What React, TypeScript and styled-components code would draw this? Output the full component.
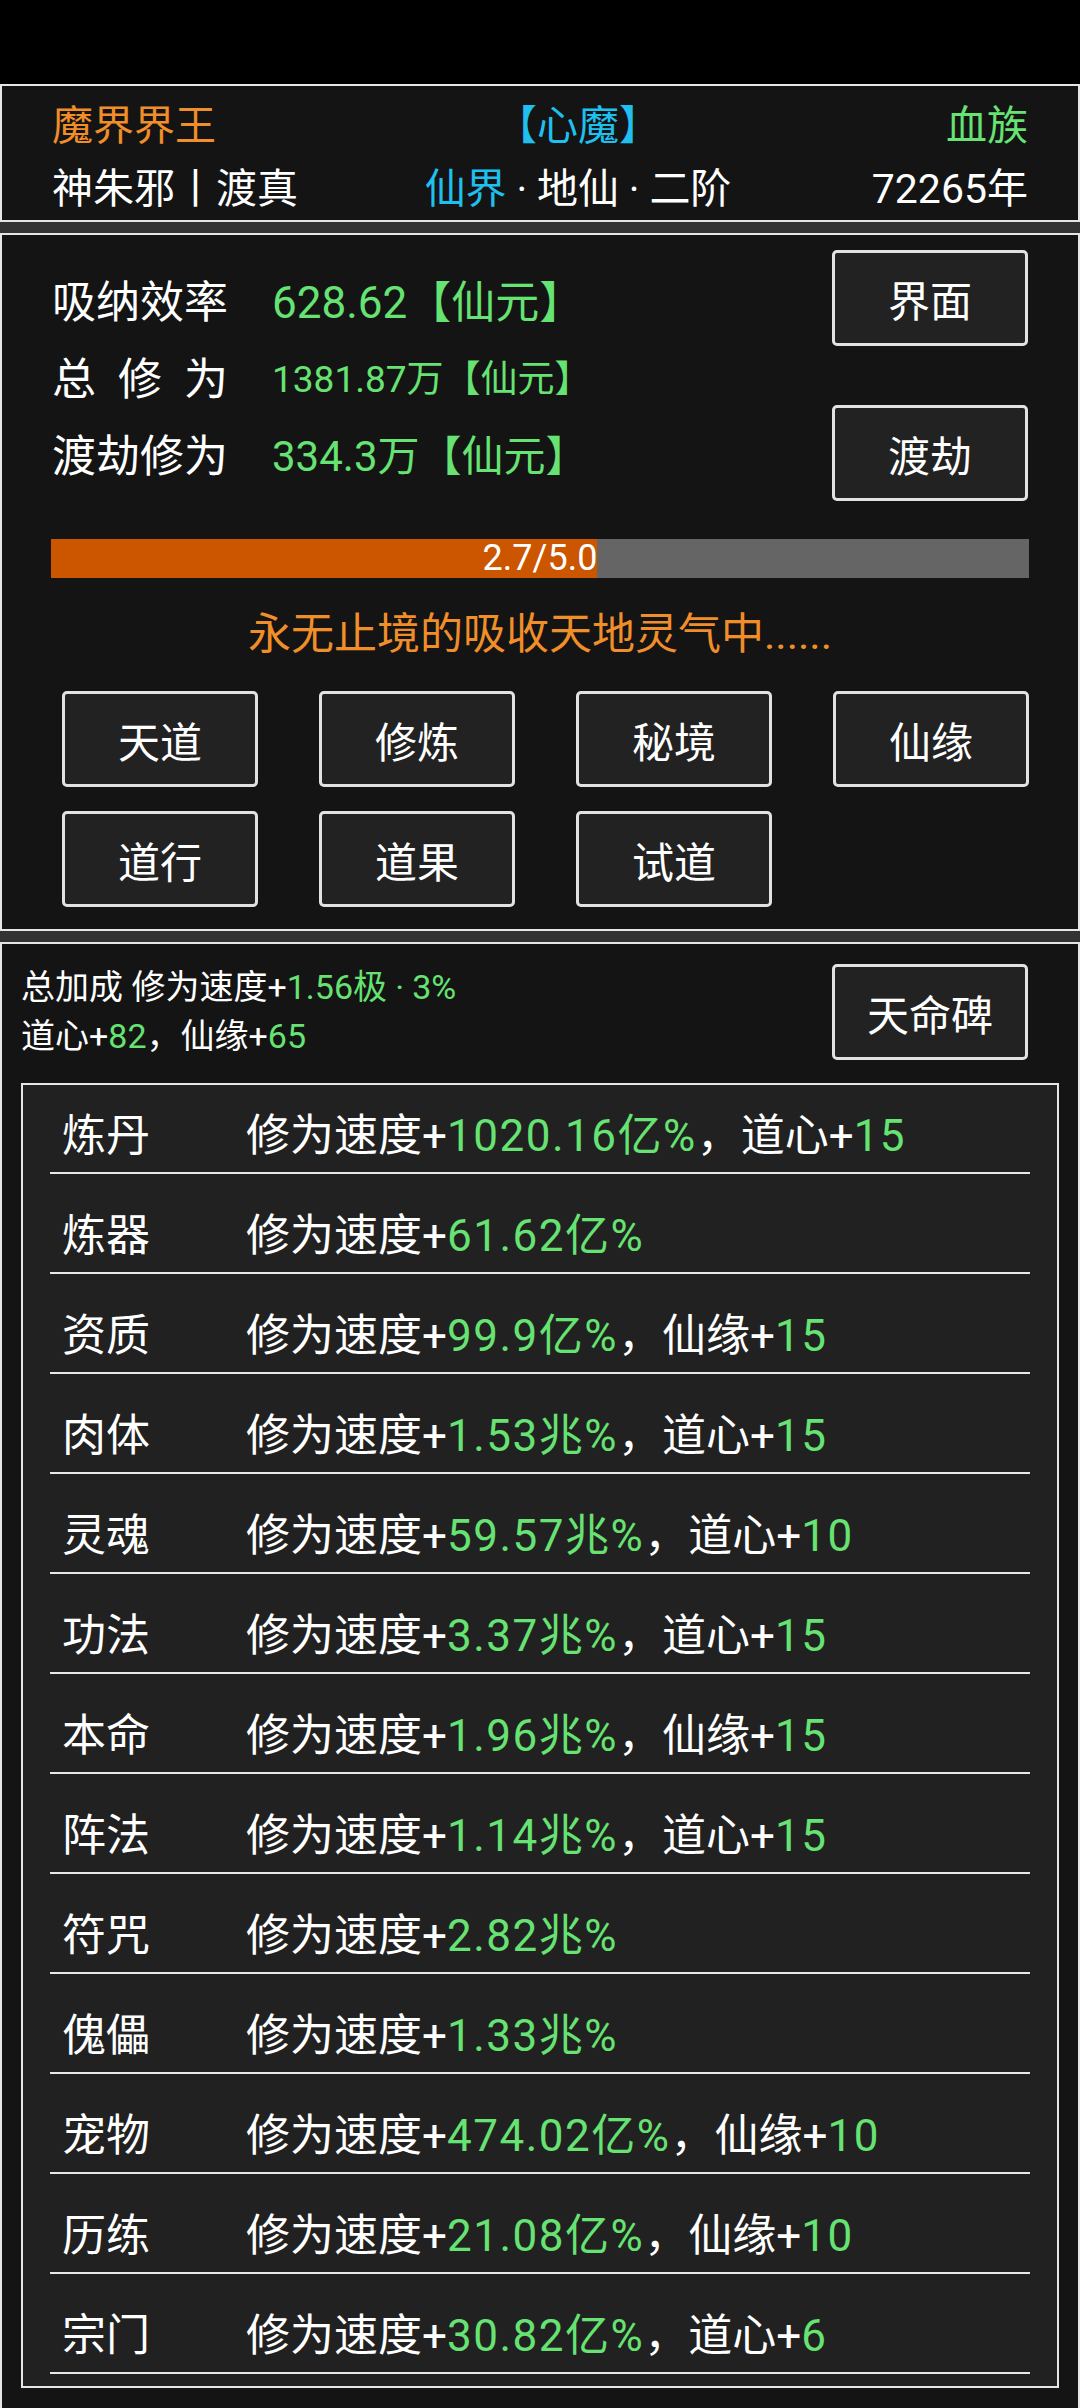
import React from 'react';
import styled, { createGlobalStyle } from 'styled-components';

const GlobalStyle = createGlobalStyle`
  html, body {
    margin: 0;
    padding: 0;
    background: #333;
    overflow: hidden;
  }
  body {
    font-family: Roboto, "Noto Sans CJK SC", sans-serif;
    color: #fff;
  }
  * { box-sizing: border-box; }
`;

const GREEN = '#66e372';
const ORANGE = '#f08e2a';
const CYAN = '#1fc0ef';

const Screen = styled.div`
  width: 1080px;
  height: 2408px;
  background: #333;
  display: flex;
  flex-direction: column;
  overflow: hidden;
`;

const StatusBar = styled.div`
  height: 84px;
  background: #000;
  flex-shrink: 0;
`;

const Panel = styled.section<{ $last?: boolean }>`
  background: #141414;
  border: 2px solid #e6e6e6;
  border-bottom: ${p => (p.$last ? 'none' : '2px solid #e6e6e6')};
  margin-bottom: ${p => (p.$last ? 0 : 11)}px;
  flex: ${p => (p.$last ? 1 : 'none')};
`;

const HeaderGrid = styled.div`
  display: grid;
  grid-template-columns: 326px 400px 1fr;
  grid-auto-rows: 63px;
  align-items: center;
  font-size: 41px;
  padding: 4px 50px 4px;
`;

const Cell = styled.div<{ $align: 'left' | 'center' | 'right'; $color?: string }>`
  text-align: ${p => p.$align};
  color: ${p => p.$color ?? '#fff'};
  white-space: nowrap;
`;

const Tint = styled.span<{ $color: string }>`
  color: ${p => p.$color};
`;

const Dot = styled.span`
  font-family: Roboto, sans-serif;
  padding: 0 0.24em;
`;

const CultBody = styled.div`
  padding: 15px 50px 22px;
`;

const TopSection = styled.div`
  display: flex;
  justify-content: space-between;
  align-items: center;
`;

const StatList = styled.div`
  display: flex;
  flex-direction: column;
`;

const StatRow = styled.div`
  display: flex;
  align-items: center;
  height: 77px;
  white-space: nowrap;
`;

const StatLabel = styled.span`
  width: 176px;
  font-size: 44px;
  text-align: justify;
  text-align-last: justify;
  margin-right: 44px;
`;

const StatValue = styled.span<{ $size: number }>`
  color: ${GREEN};
  font-size: ${p => p.$size}px;
`;

const SideButtons = styled.div`
  display: flex;
  flex-direction: column;
  gap: 59px;
`;

const Btn = styled.div`
  width: 196px;
  height: 96px;
  border: 3px solid #e2e2e2;
  border-radius: 5px;
  background: #222;
  color: #fff;
  font-size: 42px;
  display: flex;
  align-items: center;
  justify-content: center;
`;

const Progress = styled.div<{ $pct: number }>`
  margin: 38px -1px 0;
  height: 39px;
  background: linear-gradient(
    to right,
    #cc5500 ${p => p.$pct}%,
    #656565 ${p => p.$pct}%
  );
  color: #fff;
  font-size: 36px;
  line-height: 39px;
  text-align: center;
`;

const Message = styled.div`
  height: 113px;
  line-height: 113px;
  text-align: center;
  color: ${ORANGE};
  font-size: 43px;
`;

const ButtonGrid = styled.div`
  display: grid;
  grid-template-columns: repeat(4, 196px);
  column-gap: 61px;
  row-gap: 24px;
  padding-left: 10px;
`;

const SummaryBar = styled.div`
  display: flex;
  justify-content: space-between;
  align-items: center;
  padding: 19px 50px 0 19px;
`;

const SummaryText = styled.div`
  font-size: 34px;
  line-height: 49px;
  white-space: nowrap;
`;

const ListBox = styled.div`
  margin: 22px 19px 0;
  border: 2px solid #e6e6e6;
  background: #212121;
  padding: 0 27px 12px;
  display: flex;
  flex-direction: column;
  gap: 11px;
`;

const ListRow = styled.div`
  display: flex;
  padding: 26px 0 11px 12px;
  line-height: 50px;
  font-size: 44px;
  border-bottom: 2px solid #e8e8e8;
  white-space: nowrap;

  ${Tint} {
    letter-spacing: 1.5px;
  }
`;

const RowLabel = styled.span`
  width: 184px;
  flex-shrink: 0;
`;

type Bonus = { name: string; speed: string; extra?: [string, string] };

const bonuses: Bonus[] = [
  { name: '炼丹', speed: '1020.16亿%', extra: ['道心', '15'] },
  { name: '炼器', speed: '61.62亿%' },
  { name: '资质', speed: '99.9亿%', extra: ['仙缘', '15'] },
  { name: '肉体', speed: '1.53兆%', extra: ['道心', '15'] },
  { name: '灵魂', speed: '59.57兆%', extra: ['道心', '10'] },
  { name: '功法', speed: '3.37兆%', extra: ['道心', '15'] },
  { name: '本命', speed: '1.96兆%', extra: ['仙缘', '15'] },
  { name: '阵法', speed: '1.14兆%', extra: ['道心', '15'] },
  { name: '符咒', speed: '2.82兆%' },
  { name: '傀儡', speed: '1.33兆%' },
  { name: '宠物', speed: '474.02亿%', extra: ['仙缘', '10'] },
  { name: '历练', speed: '21.08亿%', extra: ['仙缘', '10'] },
  { name: '宗门', speed: '30.82亿%', extra: ['道心', '6'] },
];

const actions = ['天道', '修炼', '秘境', '仙缘', '道行', '道果', '试道'];

export default function App() {
  const progress = 55.8;
  return (
    <>
      <GlobalStyle />
      <Screen>
        <StatusBar />

        <Panel>
          <HeaderGrid>
            <Cell $align="left" $color={ORANGE}>魔界界王</Cell>
            <Cell $align="center" $color={CYAN}>【心魔】</Cell>
            <Cell $align="right" $color={GREEN}>血族</Cell>
            <Cell $align="left">神朱邪丨渡真</Cell>
            <Cell $align="center">
              <Tint $color={CYAN}>仙界</Tint>
              <Dot>·</Dot>地仙<Dot>·</Dot>二阶
            </Cell>
            <Cell $align="right">72265年</Cell>
          </HeaderGrid>
        </Panel>

        <Panel>
          <CultBody>
            <TopSection>
              <StatList>
                <StatRow>
                  <StatLabel>吸纳效率</StatLabel>
                  <StatValue $size={44}>628.62【仙元】</StatValue>
                </StatRow>
                <StatRow>
                  <StatLabel>总 修 为</StatLabel>
                  <StatValue $size={37}>1381.87万【仙元】</StatValue>
                </StatRow>
                <StatRow>
                  <StatLabel>渡劫修为</StatLabel>
                  <StatValue $size={42}>334.3万【仙元】</StatValue>
                </StatRow>
              </StatList>
              <SideButtons>
                <Btn>界面</Btn>
                <Btn>渡劫</Btn>
              </SideButtons>
            </TopSection>

            <Progress $pct={progress}>2.7/5.0</Progress>
            <Message>永无止境的吸收天地灵气中......</Message>

            <ButtonGrid>
              {actions.map(a => (
                <Btn key={a}>{a}</Btn>
              ))}
            </ButtonGrid>
          </CultBody>
        </Panel>

        <Panel $last>
          <SummaryBar>
            <SummaryText>
              <div>
                总加成 修为速度+<Tint $color={GREEN}>1.56极<Dot>·</Dot>3%</Tint>
              </div>
              <div>
                道心+<Tint $color={GREEN}>82</Tint>，仙缘+<Tint $color={GREEN}>65</Tint>
              </div>
            </SummaryText>
            <Btn>天命碑</Btn>
          </SummaryBar>

          <ListBox>
            {bonuses.map(b => (
              <ListRow key={b.name}>
                <RowLabel>{b.name}</RowLabel>
                <span>
                  修为速度+<Tint $color={GREEN}>{b.speed}</Tint>
                  {b.extra && (
                    <>
                      ，{b.extra[0]}+<Tint $color={GREEN}>{b.extra[1]}</Tint>
                    </>
                  )}
                </span>
              </ListRow>
            ))}
          </ListBox>
        </Panel>
      </Screen>
    </>
  );
}
